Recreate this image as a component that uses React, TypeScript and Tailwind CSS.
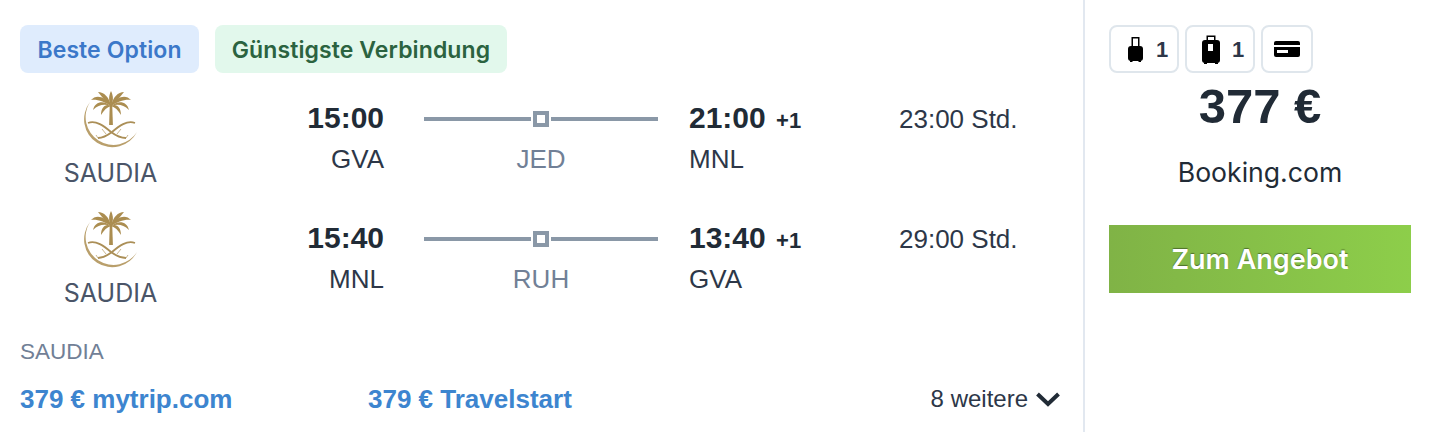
import type { ReactNode } from "react";

const sans = "font-['Liberation_Sans',Arial,sans-serif]";
const round = "font-['Inter',sans-serif]";

const fronds = [
  "M28 15 C30 6 35 1 41 1 C37 6 33 11 28 15Z",
  "M28 15 C34 5 43 3 48 9 C42 8 34 11 28 15Z",
  "M28 15 C35 9 44 10 46 19 C40 13 34 13 28 15Z",
  "M28 15 C33 12 38 16 38 24 C35 19 32 16 28 15Z",
];

function SaudiaLogo() {
  return (
    <div className="flex flex-col items-center">
      <svg width="56" height="58" viewBox="0 0 56 58" className="block">
        <g fill="#ab8d50">
          {fronds.map((d) => (
            <g key={d}>
              <path d={d} />
              <path d={d} transform="translate(56 0) scale(-1 1)" />
            </g>
          ))}
          <path d="M28 15 C25 9 26 4 28 0 C30 4 31 9 28 15Z" />
          <path d="M26.8 13h2.4l.7 21h-3.8z" />
        </g>
        <path d="M7 11 A28 28 0 1 0 54 41 A27.7 27.7 0 1 1 7 11Z" fill="#b99f6b" />
        <path d="M5 32 C13 29 21 35 28 41 C32 44 37 47 43 47" fill="none" stroke="#ab8f57" strokeWidth="1.8" />
        <path d="M52 32 C44 29 36 35 29 41 C25 44 20 47 15 47" fill="none" stroke="#ab8f57" strokeWidth="1.8" />
        <path d="M19 38l4 5M38 38l-4 5M43 47l2-3M15 47l-2-3" fill="none" stroke="#c4ae82" strokeWidth="0.9" />
      </svg>
      <span className={`${round} mt-[9px] text-[25px] leading-[30px] text-[#4a5568]`}>SAUDIA</span>
    </div>
  );
}

interface RouteProps {
  from: string;
  via: string;
  to: string;
  dep: string;
  arr: string;
  dur: string;
}

function Route({ from, via, to, dep, arr, dur }: RouteProps) {
  return (
    <div className="flex h-[120px] items-start">
      <div className="w-[181px] pt-[3px]">
        <SaudiaLogo />
      </div>
      <div className={`${sans} w-[183px] pt-[13px] text-right`}>
        <div className="text-[30px] font-bold leading-[34px] text-[#212b36]">{dep}</div>
        <div className="mt-[7px] text-[26px] leading-[34px] text-[#2d3748]">{from}</div>
      </div>
      <div className={`${sans} ml-[40px] w-[234px] pt-[14px]`}>
        <div className="flex h-[34px] items-center">
          <span className="h-[4px] flex-1 bg-[#8a98a7]" />
          <span className="mx-[2px] size-[16px] border-[4px] border-[#8a98a7] bg-white" />
          <span className="h-[4px] flex-1 bg-[#8a98a7]" />
        </div>
        <div className="mt-[6px] text-center text-[26px] leading-[34px] text-[#718096]">{via}</div>
      </div>
      <div className={`${sans} ml-[31px] w-[210px] pt-[13px]`}>
        <div className="text-[30px] font-bold leading-[34px] text-[#212b36]">
          {arr} <span className="ml-[2px] text-[22px] font-bold leading-none">+1</span>
        </div>
        <div className="mt-[7px] text-[26px] leading-[34px] text-[#2d3748]">{to}</div>
      </div>
      <div className={`${sans} pt-[14px] text-[26px] leading-[34px] text-[#2d3748]`}>{dur}</div>
    </div>
  );
}

function Chip({ className, children }: { className: string; children: ReactNode }) {
  return (
    <div className={`flex h-[48px] items-center rounded-lg border-2 border-[#dfe6ec] ${className}`}>
      {children}
    </div>
  );
}

export default function App() {
  return (
    <div className="flex h-[432px] w-[1432px] overflow-hidden bg-white">
      <div className="flex w-[1083px] flex-col pt-[25px]">
        <div className={`${round} flex gap-[16px] pl-[20px] text-center text-[23px] font-semibold leading-[46px] tracking-[0.1px]`}>
          <span className="h-[48px] w-[179px] rounded-lg bg-[#dfecfd] pt-[2px] text-[#3b78c9]">Beste Option</span>
          <span className="h-[48px] w-[292px] rounded-lg bg-[#e2f8ec] pt-[2px] text-[#2b6340]">Günstigste Verbindung</span>
        </div>
        <div className="mt-[15px] pl-[20px]">
          <Route dep="15:00" arr="21:00" dur="23:00 Std." from="GVA" via="JED" to="MNL" />
          <Route dep="15:40" arr="13:40" dur="29:00 Std." from="MNL" via="RUH" to="GVA" />
        </div>
        <div className={`${sans} ml-[20px] mt-[10px] text-[22.5px] leading-[28px] text-[#718096]`}>SAUDIA</div>
        <div className={`${sans} mt-[18px] flex items-center px-[20px] text-[26px] leading-[30px]`}>
          <span className="w-[348px] font-bold text-[#3d85cf]">379 € mytrip.com</span>
          <span className="font-bold text-[#3d85cf]">379 € Travelstart</span>
          <span className="ml-auto mr-[3px] flex items-center gap-[8px] text-[24px] text-[#2d3748]">
            8 weitere
            <svg width="24" height="15" viewBox="0 0 24 15" fill="none" stroke="#212b36" strokeWidth="4">
              <path d="M1.5 2 L12 12 L22.5 2" />
            </svg>
          </span>
        </div>
      </div>
      <div className="flex flex-1 flex-col border-l-2 border-[#e2e8f0] pl-[24px] pr-[21px] pt-[25px]">
        <div className={`${sans} flex gap-[6px] text-[22px] font-bold leading-[30px] text-[#2d3748]`}>
          <Chip className="w-[70px] pl-[17px]">
            <svg width="15" height="25" viewBox="0 0 15 25" fill="#000" className="mr-[13px]">
              <path d="M3.5 0h8v9H10V1.5H5V9H3.5z" />
              <rect x="0" y="9" width="15" height="15" rx="3" />
              <rect x="2" y="23.5" width="2.5" height="1.5" />
              <rect x="10.5" y="23.5" width="2.5" height="1.5" />
            </svg>
            <span className="pt-[2px]">1</span>
          </Chip>
          <Chip className="w-[70px] pl-[15px]">
            <svg width="18" height="29" viewBox="0 0 18 29" className="mr-[12px]">
              <path d="M4.5 5V.5h9V5H12V2H6v3z" fill="#000" />
              <rect x="0" y="5" width="18" height="23" rx="3" fill="#000" />
              <rect x="2" y="27.5" width="3" height="1.5" fill="#000" />
              <rect x="13" y="27.5" width="3" height="1.5" fill="#000" />
              <rect x="6" y="9" width="5" height="7" fill="#fff" />
            </svg>
            <span className="pt-[2px]">1</span>
          </Chip>
          <Chip className="w-[52px] justify-center">
            <svg width="26" height="16" viewBox="0 0 26 16">
              <rect width="26" height="16" rx="2" fill="#000" />
              <rect y="4" width="26" height="2" fill="#fff" />
              <rect x="3" y="9" width="11" height="3" fill="#fff" />
            </svg>
          </Chip>
        </div>
        <div className={`${sans} mt-[7px] text-center text-[49px] font-bold leading-[52px] text-[#212b36]`}>377 €</div>
        <div className={`${round} mt-[20px] text-center text-[26.6px] leading-[40px] text-[#212b36]`}>Booking.com</div>
        <button className={`${round} mt-[33px] h-[68px] w-full bg-gradient-to-r from-[#80b346] to-[#8dce4a] pt-[2px] text-[27px] font-semibold text-white [text-shadow:0_-1px_1px_rgba(0,0,0,0.4)]`}>
          Zum Angebot
        </button>
      </div>
    </div>
  );
}
